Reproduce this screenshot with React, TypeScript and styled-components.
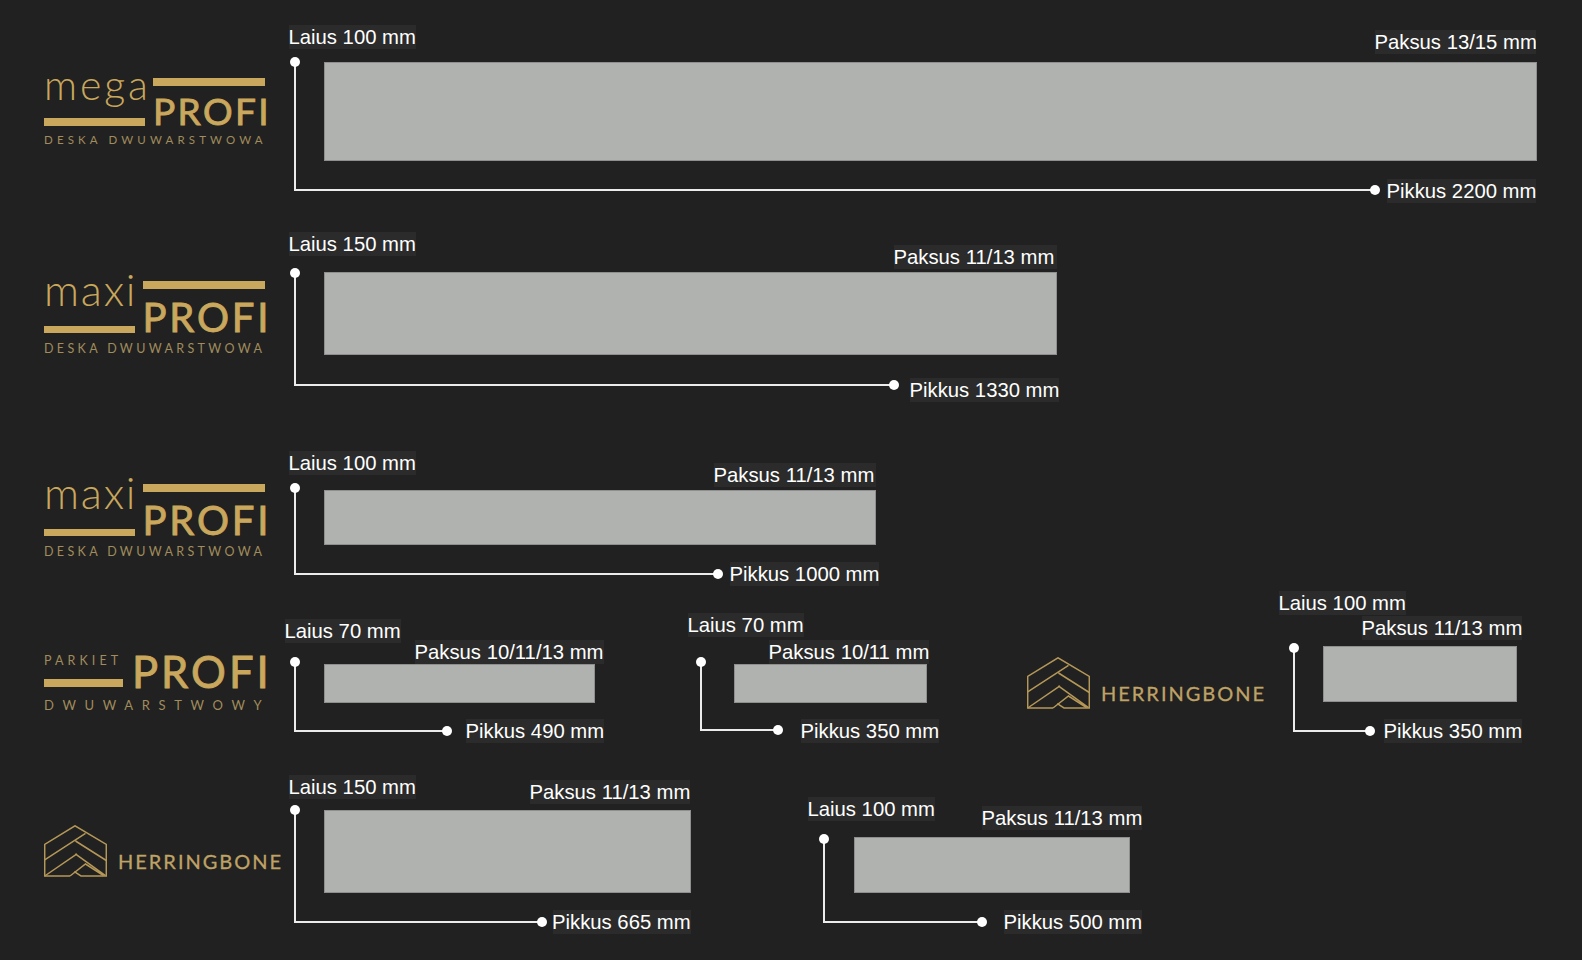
import React from 'react';
import styled, { createGlobalStyle } from 'styled-components';

const GOLD = '#c9a75c';
const GOLD_DIM = '#a08c5c';

const GlobalStyle = createGlobalStyle`
  html, body {
    margin: 0;
    padding: 0;
    background: #212121;
  }
`;

const Page = styled.div`
  width: 1582px;
  height: 960px;
  overflow: hidden;
  background: #212121;
`;

const Row = styled.div<{ $h: number }>`
  display: flex;
  align-items: flex-start;
  height: ${p => p.$h}px;
  padding-left: 44px;
`;

const LogoSlot = styled.div<{ $gap?: number; $top: number }>`
  flex: none;
  margin-left: ${p => p.$gap || 0}px;
  margin-top: ${p => p.$top}px;
`;

/* ---- logos ---- */

const ProfiGrid = styled.div<{ $left: number; $right: number; $colGap: number }>`
  display: grid;
  grid-template-columns: ${p => p.$left}px ${p => p.$right}px;
  column-gap: ${p => p.$colGap}px;
  width: 221px;
  font-family: Lato, "Open Sans", sans-serif;
  color: ${GOLD};
`;

const Stack = styled.div`
  display: flex;
  flex-direction: column;
`;

const Bar = styled.div<{ $h: number; $mt?: number }>`
  height: ${p => p.$h}px;
  margin-top: ${p => p.$mt || 0}px;
  background: ${GOLD};
`;

const Word = styled.div<{ $size: number; $h: number; $spacing: number; $mt: number }>`
  font-family: Lato, sans-serif;
  font-weight: 300;
  font-size: ${p => p.$size}px;
  line-height: ${p => p.$h}px;
  height: ${p => p.$h}px;
  margin-top: ${p => p.$mt}px;
  letter-spacing: ${p => p.$spacing}px;
  white-space: nowrap;
`;

const SmallWord = styled.div`
  font-size: 12.5px;
  line-height: 14px;
  height: 14px;
  letter-spacing: 4.1px;
  color: ${GOLD_DIM};
  white-space: nowrap;
`;

const Profi = styled.div<{ $size: number; $h: number; $spacing: number; $mt: number }>`
  font-size: ${p => p.$size}px;
  line-height: ${p => p.$h}px;
  height: ${p => p.$h}px;
  margin-top: ${p => p.$mt}px;
  letter-spacing: ${p => p.$spacing}px;
  font-weight: 400;
  -webkit-text-stroke: 0.9px ${GOLD};
  white-space: nowrap;
`;

const Sub = styled.div<{ $size: number; $spacing: number; $mt: number }>`
  grid-column: 1 / span 2;
  margin-top: ${p => p.$mt}px;
  font-size: ${p => p.$size}px;
  line-height: 14px;
  letter-spacing: ${p => p.$spacing}px;
  color: ${GOLD_DIM};
  white-space: nowrap;
`;

const MegaLogo = () => (
  <ProfiGrid $left={101} $right={112} $colGap={8}>
    <Stack>
      <Word $size={41} $h={34} $spacing={2.9} $mt={-10.5}>mega</Word>
      <Bar $h={7.5} $mt={16.5} />
    </Stack>
    <Stack>
      <Bar $h={7.5} />
      <Profi $size={37} $h={30} $spacing={2.4} $mt={10}>PROFI</Profi>
    </Stack>
    <Sub $size={11.5} $spacing={4.15} $mt={7}>DESKA DWUWARSTWOWA</Sub>
  </ProfiGrid>
);

const MaxiLogo = () => (
  <ProfiGrid $left={90.5} $right={122.5} $colGap={8}>
    <Stack>
      <Word $size={43.5} $h={36} $spacing={1.8} $mt={-9.8}>maxi</Word>
      <Bar $h={7.6} $mt={18.5} />
    </Stack>
    <Stack>
      <Bar $h={8} />
      <Profi $size={40} $h={32} $spacing={2.8} $mt={12.2}>PROFI</Profi>
    </Stack>
    <Sub $size={12.5} $spacing={3.35} $mt={9.2}>DESKA DWUWARSTWOWA</Sub>
  </ProfiGrid>
);

const ParkietLogo = () => (
  <ProfiGrid $left={79} $right={133} $colGap={9}>
    <Stack>
      <SmallWord>PARKIET</SmallWord>
      <Bar $h={7.7} $mt={11} />
    </Stack>
    <Stack>
      <Profi $size={43.5} $h={32} $spacing={3} $mt={0.5}>PROFI</Profi>
    </Stack>
    <Sub $size={13} $spacing={8.65} $mt={11.3}>DWUWARSTWOWY</Sub>
  </ProfiGrid>
);

const HbWrap = styled.div`
  display: flex;
  align-items: flex-end;
  gap: 11px;
  width: 237px;

  svg {
    flex: none;
  }
`;

const HbText = styled.div`
  font-family: Lato, sans-serif;
  font-size: 20px;
  line-height: 20px;
  letter-spacing: 2px;
  margin-bottom: 6px;
  white-space: nowrap;
  color: #bfa265;
  -webkit-text-stroke: 0.3px #bfa265;
`;

const HerringboneLogo = () => (
  <HbWrap>
    <svg width="63" height="52" viewBox="0 0 63 52" fill="none" stroke="#b59857" strokeWidth="1.5">
      <path d="M26 51H.7V19.4L31 .8 62.3 19.4V51H37l-6.7-4.3" />
      <path d="M.7 34.8 41.5 8.3M.7 51 33 28.8M31.5 16 62.3 35.5M31.3 28.8 61.5 50.6M26 51 41.5 39 59.5 50.6" />
    </svg>
    <HbText>HERRINGBONE</HbText>
  </HbWrap>
);

/* ---- dimension diagrams ---- */

const Canvas = styled.div<{ $gap: number; $top: number; $w: number; $h: number }>`
  position: relative;
  flex: none;
  margin-left: ${p => p.$gap}px;
  margin-top: ${p => p.$top}px;
  width: ${p => p.$w}px;
  height: ${p => p.$h}px;
`;

const Label = styled.div<{ $x: number; $y: number; $clip?: number }>`
  position: absolute;
  left: ${p => p.$x}px;
  top: ${p => p.$y}px;
  ${p => (p.$clip ? `width: ${p.$clip}px; overflow: hidden;` : '')}
  height: 24px;
  font-family: "Liberation Sans", Arial, sans-serif;
  font-size: 20.3px;
  line-height: 24px;
  text-indent: -0.5px;
  color: #fff;
  background: #2b2b2b;
  white-space: nowrap;
`;

const Board = styled.div<{ $x: number; $y: number; $w: number; $h: number }>`
  position: absolute;
  left: ${p => p.$x}px;
  top: ${p => p.$y}px;
  width: ${p => p.$w}px;
  height: ${p => p.$h}px;
  box-sizing: border-box;
  background: #b0b2b0;
  border: 1px solid #8e8f8e;
`;

const Bracket = styled.div<{ $x: number; $y: number; $w: number; $h: number }>`
  position: absolute;
  left: ${p => p.$x}px;
  top: ${p => p.$y}px;
  width: ${p => p.$w}px;
  height: ${p => p.$h}px;
  border-left: 2px solid #ececec;
  border-bottom: 2px solid #ececec;

  &::before,
  &::after {
    content: '';
    position: absolute;
    width: 10px;
    height: 10px;
    border-radius: 50%;
    background: #fff;
  }
  &::before {
    left: -6px;
    top: -5px;
  }
  &::after {
    right: -5px;
    bottom: -6px;
  }
`;

type Text = { x: number; y: number; text: string; clip?: number };

type DiagramSpec = {
  // page coordinates; the canvas box is taken from `box`
  box: [number, number, number, number];
  gap: number;
  rowTop: number;
  laius: Text;
  paksus: Text;
  pikkus: Text;
  board: [number, number, number, number];
  // vertical line x, dot y, end dot x, horizontal line y
  bracket: [number, number, number, number];
};

const Diagram = ({ box, gap, rowTop, laius, paksus, pikkus, board, bracket }: DiagramSpec) => {
  const [l, t, r, b] = box;
  return (
    <Canvas $gap={gap} $top={t - rowTop} $w={r - l} $h={b - t}>
      <Board $x={board[0] - l} $y={board[1] - t} $w={board[2] - board[0]} $h={board[3] - board[1]} />
      <Bracket
        $x={bracket[0] - l}
        $y={bracket[1] - t}
        $w={bracket[2] - bracket[0] - 2}
        $h={bracket[3] - bracket[1]}
      />
      <Label $x={laius.x - l} $y={laius.y - t}>{laius.text}</Label>
      <Label $x={paksus.x - l} $y={paksus.y - t} $clip={paksus.clip}>{paksus.text}</Label>
      <Label $x={pikkus.x - l} $y={pikkus.y - t} $clip={pikkus.clip}>{pikkus.text}</Label>
    </Canvas>
  );
};

export default function App() {
  return (
    <Page>
      <GlobalStyle />
      <Row $h={225}>
        <LogoSlot $top={78}><MegaLogo /></LogoSlot>
        <Diagram
          rowTop={0}
          gap={24}
          box={[289, 25, 1537, 203]}
          laius={{ x: 289, y: 25, text: 'Laius 100 mm' }}
          paksus={{ x: 1375, y: 30, text: 'Paksus 13/15 mm', clip: 161 }}
          pikkus={{ x: 1387, y: 179, text: 'Pikkus 2200 mm', clip: 149 }}
          board={[324, 62, 1537, 161]}
          bracket={[294, 62, 1375, 189]}
        />
      </Row>
      <Row $h={215}>
        <LogoSlot $top={56}><MaxiLogo /></LogoSlot>
        <Diagram
          rowTop={225}
          gap={24}
          box={[289, 232, 1060, 402]}
          laius={{ x: 289, y: 232, text: 'Laius 150 mm' }}
          paksus={{ x: 894, y: 245, text: 'Paksus 11/13 mm', clip: 163 }}
          pikkus={{ x: 910, y: 378, text: 'Pikkus 1330 mm' }}
          board={[324, 272, 1057, 355]}
          bracket={[294, 273, 894, 384]}
        />
      </Row>
      <Row $h={160}>
        <LogoSlot $top={44}><MaxiLogo /></LogoSlot>
        <Diagram
          rowTop={440}
          gap={24}
          box={[289, 451, 880, 586]}
          laius={{ x: 289, y: 451, text: 'Laius 100 mm' }}
          paksus={{ x: 714, y: 463, text: 'Paksus 11/13 mm', clip: 162 }}
          pikkus={{ x: 730, y: 562, text: 'Pikkus 1000 mm' }}
          board={[324, 490, 876, 545]}
          bracket={[294, 488, 718, 573]}
        />
      </Row>
      <Row $h={160}>
        <LogoSlot $top={54}><ParkietLogo /></LogoSlot>
        <Diagram
          rowTop={600}
          gap={20}
          box={[285, 618, 604, 744]}
          laius={{ x: 285, y: 619, text: 'Laius 70 mm' }}
          paksus={{ x: 415, y: 640, text: 'Paksus 10/11/13 mm' }}
          pikkus={{ x: 466, y: 719, text: 'Pikkus 490 mm' }}
          board={[324, 664, 595, 703]}
          bracket={[294, 662, 447, 730]}
        />
        <Diagram
          rowTop={600}
          gap={84}
          box={[688, 613, 940, 743]}
          laius={{ x: 688, y: 613, text: 'Laius 70 mm' }}
          paksus={{ x: 769, y: 640, text: 'Paksus 10/11 mm' }}
          pikkus={{ x: 801, y: 719, text: 'Pikkus 350 mm' }}
          board={[734, 664, 927, 703]}
          bracket={[700, 662, 778, 729]}
        />
        <LogoSlot $gap={87} $top={57}><HerringboneLogo /></LogoSlot>
        <Diagram
          rowTop={600}
          gap={15}
          box={[1279, 591, 1523, 744]}
          laius={{ x: 1279, y: 591, text: 'Laius 100 mm' }}
          paksus={{ x: 1362, y: 616, text: 'Paksus 11/13 mm' }}
          pikkus={{ x: 1384, y: 719, text: 'Pikkus 350 mm' }}
          board={[1323, 646, 1517, 702]}
          bracket={[1293, 648, 1370, 730]}
        />
      </Row>
      <Row $h={200}>
        <LogoSlot $top={65}><HerringboneLogo /></LogoSlot>
        <Diagram
          rowTop={760}
          gap={8}
          box={[289, 775, 692, 934]}
          laius={{ x: 289, y: 775, text: 'Laius 150 mm' }}
          paksus={{ x: 530, y: 780, text: 'Paksus 11/13 mm' }}
          pikkus={{ x: 552.5, y: 910, text: 'Pikkus 665 mm' }}
          board={[324, 810, 691, 893]}
          bracket={[294, 810, 542, 921]}
        />
        <Diagram
          rowTop={760}
          gap={116}
          box={[808, 797, 1143, 935]}
          laius={{ x: 808, y: 797, text: 'Laius 100 mm' }}
          paksus={{ x: 982, y: 806, text: 'Paksus 11/13 mm' }}
          pikkus={{ x: 1004, y: 910, text: 'Pikkus 500 mm' }}
          board={[854, 837, 1130, 893]}
          bracket={[823, 839, 982, 921]}
        />
      </Row>
    </Page>
  );
}
